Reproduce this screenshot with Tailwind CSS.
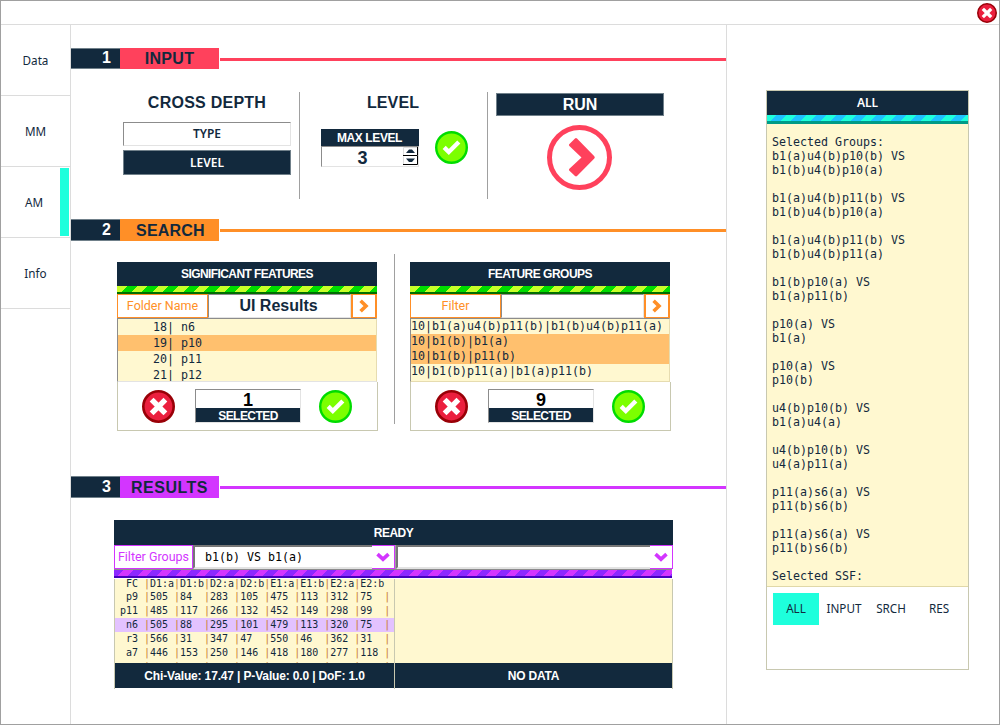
<!DOCTYPE html>
<html lang="en">
<head>
<meta charset="utf-8">
<title>Analysis</title>
<script src="https://cdn.jsdelivr.net/npm/@tailwindcss/browser@4"></script>
</head>
<body class="bg-white">
<svg class="hidden">
  <symbol id="ok" viewBox="0 0 33 33"><circle cx="16.5" cy="16.5" r="15.3" fill="#7cff00" stroke="#00dc00" stroke-width="2.4"/><path d="M9.2 16.4l4.600 4.600 10-10" fill="none" stroke="#fff" stroke-width="4.4"/></symbol>
  <symbol id="no" viewBox="0 0 33 33"><circle cx="16.5" cy="16.5" r="15.2" fill="#eb1f3e" stroke="#990007" stroke-width="2.6"/><path d="M11.500 11.500l10 10M21.500 11.500l-10 10" fill="none" stroke="#fff" stroke-width="5.4" stroke-linecap="square" stroke-linejoin="round"/></symbol>
  <symbol id="chev" viewBox="0 0 10 14"><path d="M1.600 1.800L7 7l-5.400 5.200" fill="none" stroke="currentColor" stroke-width="3.6"/></symbol>
  <symbol id="down" viewBox="0 0 14 10"><path d="M1.500 2.200L7 7.200l5.500-5" fill="none" stroke="currentColor" stroke-width="3.6"/></symbol>
</svg>
<div class="w-[1000px] h-[725px] border border-[#a0a0a0] flex flex-col overflow-hidden text-[#12293d] font-['Liberation_Sans'] whitespace-nowrap">
  <header class="h-6 shrink-0 border-b border-[#dcdcdc] flex justify-end pt-[2px] pr-[2px]">
    <svg class="w-[20px] h-[20px]"><use href="#no"/></svg>
  </header>
  <div class="flex flex-1 min-h-0">
    <nav class="w-[70px] shrink-0 border-r border-[#dcdcdc] font-['Noto_Sans'] text-[11.700px]">
      <div class="h-[71px] border-b border-[#dcdcdc] flex items-center justify-center pt-[2px]"><span>Data</span></div>
      <div class="h-[71px] border-b border-[#dcdcdc] flex items-center justify-center pt-[2px]"><span>MM</span></div>
      <div class="h-[71px] border-b border-[#dcdcdc] flex items-center justify-between pl-6 pr-[1px]"><span class="pt-[2px]">AM</span><i class="w-[9px] h-[68px] bg-[#1effdc]"></i></div>
      <div class="h-[71px] border-b border-[#dcdcdc] flex items-center justify-center pt-[2px]"><span>Info</span></div>
    </nav>

    <main class="w-[656px] shrink-0 border-r border-[#dcdcdc] flex flex-col">
      <section class="h-[171px] shrink-0 pt-[23px]">
        <div class="flex h-[21px] items-center text-[16px] font-bold">
          <div class="w-[49px] h-[21px] bg-[#12293d] border-y border-[#70808a] text-white text-right pr-[9px] leading-[18px]">1</div>
          <div class="w-[99px] h-[21px] bg-[#ff415c] text-center leading-[21px] tracking-[0.3px]">INPUT</div>
          <div class="flex-1 h-[3px] ml-[1px] mt-[2px] bg-[#ff415c]"></div>
        </div>
        <div class="flex pt-[23px] h-[130px]">
          <div class="w-[229px] h-[107px] border-r border-[#a0a0a0] pl-[52px] pr-2">
            <h3 class="h-[30px] text-center text-[16px] leading-[22px] font-bold tracking-[0.25px]">CROSS DEPTH</h3>
            <div class="h-6 border border-t-[#8c8c8c] border-l-[#8c8c8c] border-b-[#e3e3e3] border-r-[#e3e3e3] text-center font-['Noto_Sans'] font-semibold text-[12px] leading-[21px]">TYPE</div>
            <div class="mt-1 h-[25px] border border-[#70808a] bg-[#12293d] text-white text-center font-['Noto_Sans'] font-semibold text-[12px] leading-[23px]">LEVEL</div>
          </div>
          <div class="w-[188px] h-[107px] border-r border-[#a0a0a0] pl-[21px]">
            <h3 class="h-[37px] w-[144px] text-center text-[16px] leading-[22px] font-bold tracking-[0.1px]">LEVEL</h3>
            <div class="flex">
              <div class="w-[98px]">
                <div class="h-[17px] bg-[#12293d] text-white text-center text-[12px] font-bold leading-[18px] tracking-[-0.4px] pr-[1px]">MAX LEVEL</div>
                <div class="h-[21px] border border-t-[#8c8c8c] border-l-[#8c8c8c] border-b-[#e3e3e3] border-r-[#e3e3e3] flex">
                  <span class="w-[81px] text-center text-[18px] font-bold leading-[22px]">3</span>
                  <svg class="w-[15px] h-[19px]" viewBox="0 0 15 19"><path d="M.5 8V.5H14M.5 18V9.500" fill="none" stroke="#ddd"/><path d="M0 8.500H14.500V0M0 17.500H14.500V9" fill="none" stroke="#000"/><path d="M3 6h9L9 2.500H6zM3 11.500h9L9 15H6z" fill="#12293d"/></svg>
                </div>
              </div>
              <svg class="w-[33px] h-[33px] ml-4 mt-[2px]"><use href="#ok"/></svg>
            </div>
          </div>
          <div class="w-[168px] ml-2 pt-[1px] flex flex-col">
            <div class="w-[168px] h-[23px] border border-[#70808a] bg-[#12293d] text-white text-center text-[16px] font-bold leading-[22px]">RUN</div>
            <svg class="mt-[9px] ml-[51px] w-[65px] h-[65px]" viewBox="0 0 65 65"><circle cx="32.500" cy="32.500" r="30" fill="none" stroke="#ff415c" stroke-width="5"/><path d="M22.200 19.300L28 13.500Q29 12.700 30 13.600L47.300 31.200Q48.300 32.400 47.300 33.600L30 51Q29 51.900 28 51L22.200 45.600Q21.500 44.700 22.400 43.800L34.500 32.400 22.400 21Q21.500 20.100 22.200 19.300Z" fill="#ff415c"/></svg>
          </div>
        </div>
      </section>

      <section class="h-[257px] shrink-0 pt-[23px]">
        <div class="flex h-[22px] items-center text-[16px] font-bold">
          <div class="w-[49px] h-[22px] bg-[#12293d] border-y border-[#70808a] text-white text-right pr-[9px] leading-[19px]">2</div>
          <div class="w-[99px] h-[22px] bg-[#ff8f27] text-center leading-[23px] tracking-[0.2px] pl-[2px]">SEARCH</div>
          <div class="flex-1 h-[3px] ml-[1px] mt-[1px] bg-[#ff8f27]"></div>
        </div>
        <div class="flex pl-[46px] pt-[13px]">
          <div class="w-[261px] mt-2">
            <div class="w-[260px] h-6 bg-[#12293d] text-white text-center text-[12px] font-bold leading-[24px] tracking-[-0.6px]">SIGNIFICANT FEATURES</div>
            <div class="w-[260px] h-[8px] border-b-2 border-[#006e00] bg-[repeating-linear-gradient(135deg,#c8ff28_0_7.300px,#00dc00_7.300px_14.600px)]"></div>
            <div class="w-[260px] h-[24px] flex">
              <div class="w-[91px] border border-[#ff8f27] text-[#ff8f27] text-center font-[Roboto] text-[12.500px] leading-[22px]">Folder Name</div>
              <div class="w-[143px] border border-t-[#8c8c8c] border-l-[#8c8c8c] border-b-[#e3e3e3] border-r-[#e3e3e3] text-center text-[16px] font-bold leading-[22px] pr-[2px]">UI Results</div>
              <div class="w-[26px] border-2 border-t-1 border-b-1 border-[#ff8f27] text-[#ff8f27] flex items-center justify-center"><svg class="w-[10px] h-[14px]"><use href="#chev"/></svg></div>
            </div>
            <div class="w-[260px] h-[64px] border border-t-[#8c8c8c] border-l-[#8c8c8c] border-b-[#e3e3e3] border-r-[#e6dcb0] bg-[#fff8d0] overflow-hidden font-['DejaVu_Sans_Mono'] text-[11.630px] leading-[16px] whitespace-pre"><div class="pl-[35px]">18| n6</div><div class="pl-[35px] bg-[#ffc06e]">19| p10</div><div class="pl-[35px]">20| p11</div><div class="pl-[35px]">21| p12</div></div>
            <div class="h-[49px] border border-t-0 border-[#c8c8b0] flex pl-6">
              <svg class="w-[33px] h-[33px] mt-2"><use href="#no"/></svg>
              <div class="w-[106px] h-[34px] ml-5 mt-[7px] border border-t-[#8c8c8c] border-l-[#8c8c8c] border-b-[#e3e3e3] border-r-[#e3e3e3] text-center font-bold"><div class="h-[18px] text-black text-[18px] leading-[20px]">1</div><div class="h-[14px] bg-[#12293d] text-white text-[12px] leading-[16px] tracking-[-0.550px]">SELECTED</div></div>
              <svg class="w-[33px] h-[33px] ml-[18px] mt-2"><use href="#ok"/></svg>
            </div>
          </div>
          <div class="w-px h-[170px] ml-4 bg-[#a0a0a0]"></div>
          <div class="w-[261px] mt-2 ml-[15px]">
            <div class="w-[260px] h-6 bg-[#12293d] text-white text-center text-[12px] font-bold leading-[24px] tracking-[-0.5px]">FEATURE GROUPS</div>
            <div class="w-[260px] h-[8px] border-b-2 border-[#006e00] bg-[repeating-linear-gradient(135deg,#c8ff28_0_7.300px,#00dc00_7.300px_14.600px)]"></div>
            <div class="w-[260px] h-[24px] flex">
              <div class="w-[91px] border border-[#ff8f27] text-[#ff8f27] text-center font-[Roboto] text-[12.500px] leading-[22px]">Filter</div>
              <div class="w-[143px] border border-t-[#8c8c8c] border-l-[#8c8c8c] border-b-[#e3e3e3] border-r-[#e3e3e3]"></div>
              <div class="w-[26px] border-2 border-t-1 border-b-1 border-[#ff8f27] text-[#ff8f27] flex items-center justify-center"><svg class="w-[10px] h-[14px]"><use href="#chev"/></svg></div>
            </div>
            <div class="w-[260px] h-[64px] border border-t-[#8c8c8c] border-l-[#8c8c8c] border-b-[#e6dcb0] border-r-[#e6dcb0] bg-[#fff8d0] overflow-hidden font-['DejaVu_Sans_Mono'] text-[11.630px] leading-[15px] whitespace-pre"><div>10|b1(a)u4(b)p11(b)|b1(b)u4(b)p11(a)</div><div class="bg-[#ffc06e]">10|b1(b)|b1(a)</div><div class="bg-[#ffc06e]">10|b1(b)|p11(b)</div><div>10|b1(b)p11(a)|b1(a)p11(b)</div><div>  |           |</div></div>
            <div class="h-[49px] border border-t-0 border-[#c8c8b0] flex pl-6">
              <svg class="w-[33px] h-[33px] mt-2"><use href="#no"/></svg>
              <div class="w-[106px] h-[34px] ml-5 mt-[7px] border border-t-[#8c8c8c] border-l-[#8c8c8c] border-b-[#e3e3e3] border-r-[#e3e3e3] text-center font-bold"><div class="h-[18px] text-black text-[18px] leading-[20px]">9</div><div class="h-[14px] bg-[#12293d] text-white text-[12px] leading-[16px] tracking-[-0.550px]">SELECTED</div></div>
              <svg class="w-[33px] h-[33px] ml-[18px] mt-2"><use href="#ok"/></svg>
            </div>
          </div>
        </div>
      </section>

      <section class="pt-[23px]">
        <div class="flex h-[22px] items-center text-[16px] font-bold">
          <div class="w-[49px] h-[22px] bg-[#12293d] border-y border-[#70808a] text-white text-right pr-[9px] leading-[19px]">3</div>
          <div class="w-[99px] h-[22px] bg-[#d335ff] text-center leading-[23px] tracking-[0.5px]">RESULTS</div>
          <div class="flex-1 h-[3px] ml-[1px] mt-[1px] bg-[#d335ff]"></div>
        </div>
        <div class="ml-[43px] mt-[22px] w-[559px]">
          <div class="h-[25px] bg-[#12293d] text-white text-center text-[12px] font-bold leading-[26px] tracking-[-0.5px]">READY</div>
          <div class="flex h-6">
            <div class="w-[79px] border border-[#d335ff] text-[#d335ff] text-center font-[Roboto] text-[12.500px] leading-[22px]">Filter Groups</div>
            <div class="w-[179px] border-t-2 border-l-2 border-b-2 border-t-[#777] border-l-[#777] border-b-[#e3e3e3] font-['DejaVu_Sans_Mono'] text-[11.630px] pl-[10px] leading-[21px] whitespace-pre text-black">b1(b) VS b1(a)</div>
            <div class="w-[23px] border border-l-0 border-[#d335ff] text-[#d335ff] flex items-center justify-center"><svg class="w-[14px] h-[10px]"><use href="#down"/></svg></div>
            <div class="w-px bg-[#a0a0a0]"></div>
            <div class="w-[254px] border-t-2 border-l-2 border-b-2 border-t-[#777] border-l-[#777] border-b-[#e3e3e3]"></div>
            <div class="w-[23px] border border-l-0 border-[#d335ff] text-[#d335ff] flex items-center justify-center"><svg class="w-[14px] h-[10px]"><use href="#down"/></svg></div>
          </div>
          <div class="w-[558px] h-[9px] border-t border-t-[#8c8c8c] border-b-2 border-b-[#4600be] bg-[repeating-linear-gradient(135deg,#8c28ff_0_6.850px,#d335ff_6.850px_13.700px)]"></div>
          <div class="h-[110px] mt-[1px] flex border-x border-[#c8c8b0]">
            <div class="w-[280px] border-r border-[#c8c8b0]">
              <div class="h-[84px] bg-[#fff8d0] overflow-hidden"><div id="table" class="-mt-[2px] font-['DejaVu_Sans_Mono'] text-[9.970px] leading-[14px] whitespace-pre"></div></div>
              <div class="h-[25px] bg-[#12293d] text-white text-center text-[12px] font-bold leading-[26px] tracking-[-0.150px]">Chi-Value: 17.47 | P-Value: 0.0 | DoF: 1.0</div>
            </div>
            <div class="flex-1">
              <div class="h-[84px] bg-[#fff8d0]"></div>
              <div class="h-[25px] bg-[#12293d] text-white text-center text-[12px] font-bold leading-[26px] tracking-[-0.2px]">NO DATA</div>
            </div>
          </div>
        </div>
      </section>
    </main>

    <aside class="pl-[39px] pt-[65px]">
      <div class="w-[203px] h-[580px] border border-[#c8c8b0]">
        <div class="h-6 bg-[#12293d] text-white text-center font-['Noto_Sans'] font-semibold text-[12px] leading-[24px]">ALL</div>
        <div class="h-[9px] border-b-[3px] border-[#009b87] bg-[repeating-linear-gradient(135deg,#1effdc_0_7.050px,#1ec3ff_7.050px_14.100px)]"></div>
        <div class="h-[463px] pt-[11px] pl-[5px] bg-[#fff8d0] border-b border-[#e0d8a8] overflow-hidden font-['DejaVu_Sans_Mono'] text-[11.630px] leading-[14px] whitespace-pre">Selected Groups:
b1(a)u4(b)p10(b) VS
b1(b)u4(b)p10(a)

b1(a)u4(b)p11(b) VS
b1(b)u4(b)p10(a)

b1(a)u4(b)p11(b) VS
b1(b)u4(b)p11(a)

b1(b)p10(a) VS
b1(a)p11(b)

p10(a) VS
b1(a)

p10(a) VS
p10(b)

u4(b)p10(b) VS
b1(a)u4(a)

u4(b)p10(b) VS
u4(a)p11(a)

p11(a)s6(a) VS
p11(b)s6(b)

p11(a)s6(a) VS
p11(b)s6(b)

Selected SSF:</div>
        <div class="flex pl-[6px] pt-[6px] font-['Noto_Sans'] text-[11.700px] leading-[30px] text-center">
          <div class="w-[46px] h-8 bg-[#1effdc]">ALL</div>
          <div class="w-[50px]">INPUT</div>
          <div class="w-[44px]">SRCH</div>
          <div class="w-[52px]">RES</div>
        </div>
      </div>
    </aside>
  </div>
</div>
<script>
const rows = [
  ' FC |D1:a|D1:b|D2:a|D2:b|E1:a|E1:b|E2:a|E2:b',
  ' p9 |505 |84  |283 |105 |475 |113 |312 |75  |',
  'p11 |485 |117 |266 |132 |452 |149 |298 |99  |',
  ' n6 |505 |88  |295 |101 |479 |113 |320 |75  |',
  ' r3 |566 |31  |347 |47  |550 |46  |362 |31  |',
  ' a7 |446 |153 |250 |146 |418 |180 |277 |118 |',
  '    |    |    |    |    |    |    |    |    |'
];
const rowClass = i => i === 0 ? 'pl-[5px] h-[13px]' : i === 3 ? 'pl-[5px] bg-[#e3c2ff]' : 'pl-[5px]';
document.getElementById('table').innerHTML = rows.map((r, i) =>
  `<div class="${rowClass(i)}">${r.replaceAll('|', '<span class="text-[#c87832]">|</span>')}</div>`).join('');
</script>
</body>
</html>
